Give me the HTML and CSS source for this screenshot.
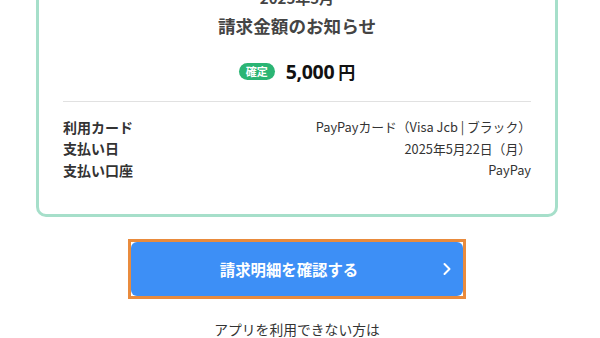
FILE: index.html
```html
<!DOCTYPE html>
<html lang="ja">

<head>
    <meta charset="UTF-8">
    <meta name="viewport" content="width=device-width, initial-scale=1.0">
    <title>請求金額のお知らせ</title>

    <link rel="stylesheet" href="styles.css">
</head>

<body>
    <div class="card">
        <p class="year">2025年5月</p>
        <h1 class="title">請求金額のお知らせ</h1>

        <div class="amount">
            <span class="badge">確定</span>
            <span class="price">5,000</span>
            <span class="yen">円</span>
        </div>

        <div class="details">
            <div class="row">
                <span class="label">利用カード</span>
                <span class="value">PayPayカード（Visa Jcb | ブラック）</span>
            </div>
            <div class="row">
                <span class="label">支払い日</span>
                <span class="value">2025年5月22日（月）</span>
            </div>
            <div class="row">
                <span class="label">支払い口座</span>
                <span class="value">PayPay</span>
            </div>
        </div>
    </div>

    <div class="actions">
        <div class="btn-focus">
            <button class="btn">
                請求明細を確認する
                <svg class="chevron" width="10" height="14" viewBox="0 0 10 14">
                    <path d="M2.5 2 L7.5 7 L2.5 12" fill="none" stroke="#fff" stroke-width="2" stroke-linecap="round" stroke-linejoin="round"/>
                </svg>
            </button>
        </div>
        <p class="note">アプリを利用できない方は</p>
    </div>
</body>

</html>
```

FILE: styles.css
```css
body {
    margin: 0;
    background: #fff;
    color: #333;
    font-family: "Noto Sans CJK JP", "Noto Sans", sans-serif;
    overflow: hidden;
}

.card {
    margin: -30px 42px 0 36px;
    padding: 15px 24px 33px;
    border: 3px solid #a6dfca;
    border-radius: 10px;
    background: #fff;
}

.year {
    margin: 0;
    font-size: 15px;
    line-height: 20px;
    font-weight: bold;
    color: #444;
    text-align: center;
}

.title {
    margin: 6px 0 0;
    font-size: 17.6px;
    line-height: 24px;
    font-weight: bold;
    color: #444;
    text-align: center;
}

.amount {
    display: flex;
    justify-content: center;
    align-items: center;
    height: 28px;
    margin-top: 19px;
}

.badge {
    display: inline-block;
    padding: 0 7px;
    height: 17px;
    line-height: 17px;
    font-size: 11px;
    font-weight: bold;
    color: #fff;
    background: #2bb574;
    border-radius: 9px;
    margin-right: 11px;
}

.price {
    font-family: "Open Sans", "Noto Sans", sans-serif;
    font-size: 19.5px;
    font-weight: bold;
    color: #111;
    letter-spacing: -0.3px;
}

.yen {
    font-size: 17px;
    font-weight: bold;
    color: #111;
    margin-left: 4px;
}

.details {
    margin-top: 16px;
    padding-top: 14px;
    border-top: 1px solid #e1e1e1;
}

.row {
    display: flex;
    justify-content: space-between;
    align-items: center;
    height: 21.5px;
}

.label {
    font-size: 14px;
    font-weight: bold;
    color: #333;
}

.value {
    font-size: 12.8px;
    color: #333;
}

.actions {
    display: flex;
    flex-direction: column;
    align-items: center;
    margin: 22px 42px 0 36px;
}

.btn-focus {
    border: 3px solid #e98b3d;
}

.btn {
    position: relative;
    display: block;
    width: 332px;
    height: 54px;
    padding: 0 16px 0 0;
    border: none;
    border-radius: 6px;
    background: #3d8ff6;
    color: #fff;
    font-family: "Noto Sans CJK JP", "Noto Sans", sans-serif;
    font-size: 15.4px;
    font-weight: bold;
    cursor: pointer;
}

.chevron {
    position: absolute;
    right: 11px;
    top: 20px;
}

.note {
    margin: 20px 0 0;
    font-size: 13.8px;
    line-height: 20px;
    color: #333;
    text-align: center;
}
```
